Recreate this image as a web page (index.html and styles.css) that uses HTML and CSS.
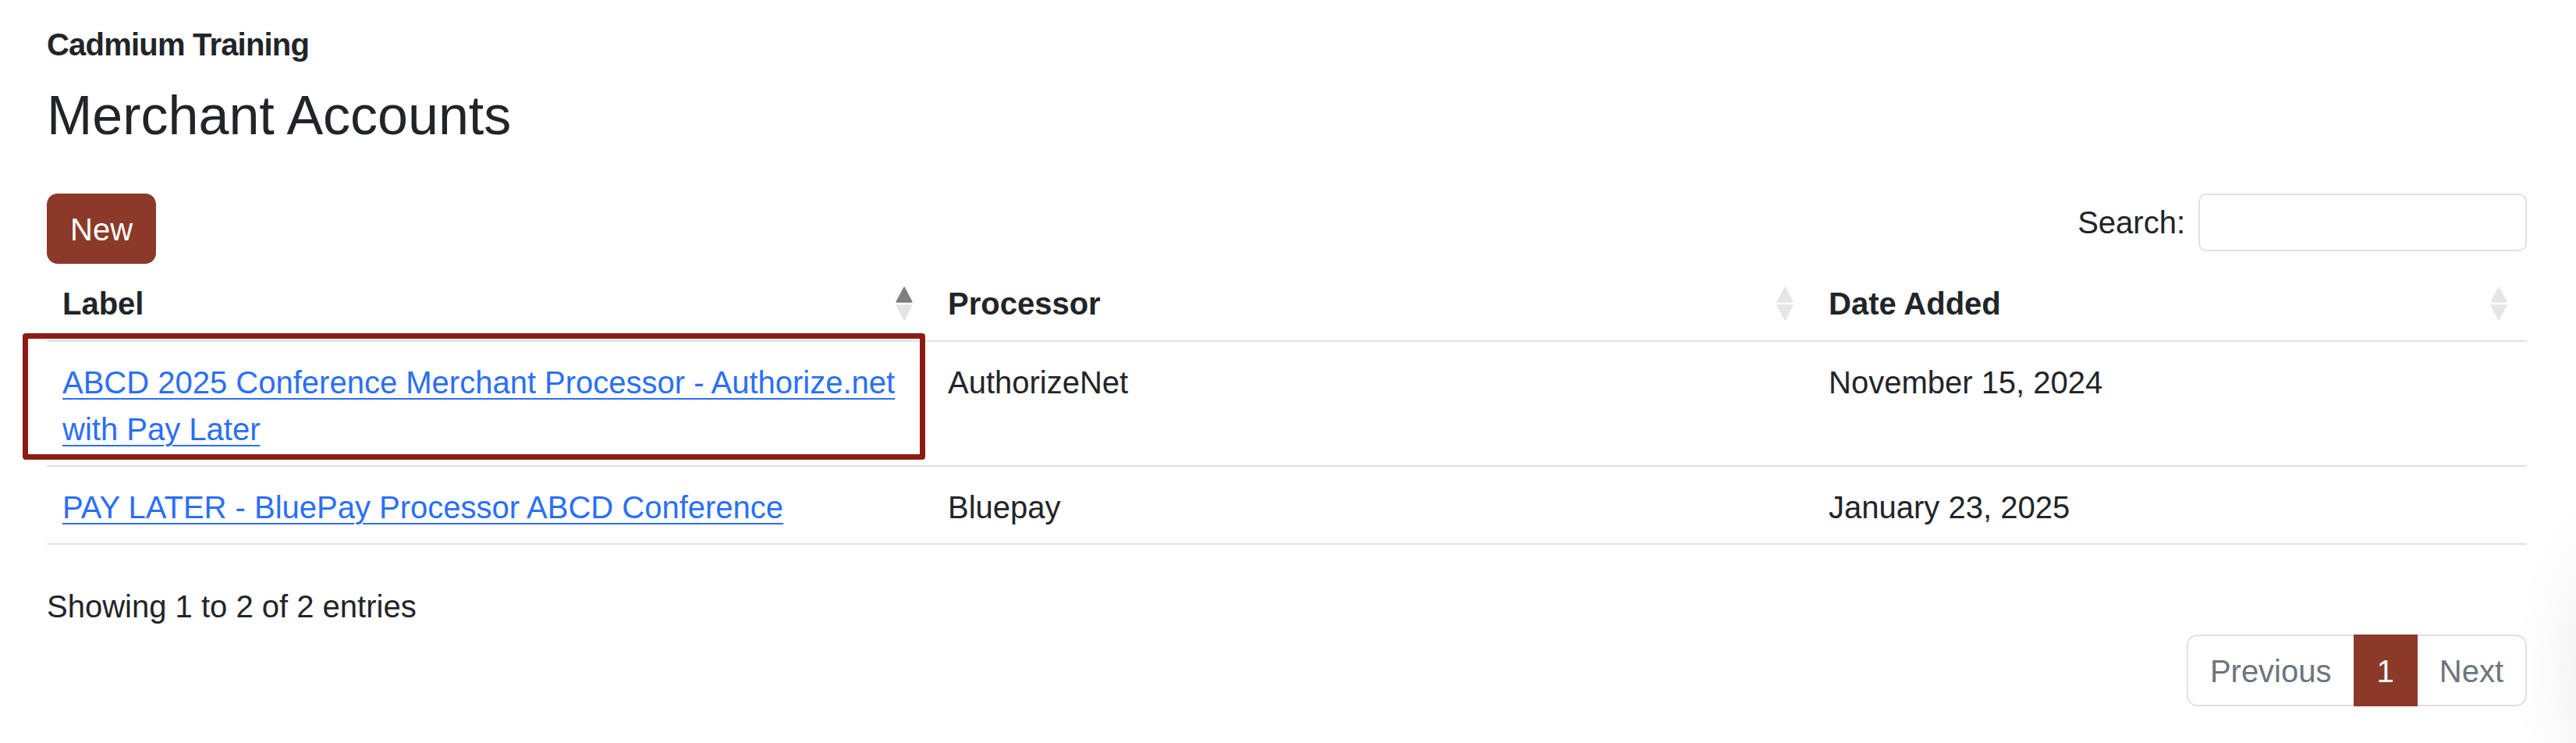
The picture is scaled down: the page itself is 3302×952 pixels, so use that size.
FILE: index.html
```html
<!DOCTYPE html>
<html lang="en">
<head>
<meta charset="utf-8">
<title>Merchant Accounts</title>
<link rel="stylesheet" href="styles.css">
</head>
<body>
<div class="page">
  <div class="org">Cadmium Training</div>
  <h1 class="title">Merchant Accounts</h1>
  <div class="toolbar">
    <button class="btn-new" type="button">New</button>
    <label class="search"><span>Search:</span><input class="search-input" type="search"></label>
  </div>
  <div class="table-wrap">
    <table class="grid">
      <colgroup><col class="c1"><col class="c2"><col class="c3"></colgroup>
      <thead>
        <tr>
          <th><div class="th-in"><span>Label</span><svg class="sort" viewBox="0 0 22 44" width="22" height="44"><polygon class="on" points="11,1 21,20 1,20"/><polygon class="off" points="1,24 21,24 11,43"/></svg></div></th>
          <th><div class="th-in"><span>Processor</span><svg class="sort" viewBox="0 0 22 44" width="22" height="44"><polygon class="off" points="11,1 21,20 1,20"/><polygon class="off" points="1,24 21,24 11,43"/></svg></div></th>
          <th><div class="th-in"><span>Date Added</span><svg class="sort" viewBox="0 0 22 44" width="22" height="44"><polygon class="off" points="11,1 21,20 1,20"/><polygon class="off" points="1,24 21,24 11,43"/></svg></div></th>
        </tr>
      </thead>
      <tbody>
        <tr>
          <td><a class="lnk" href="#">ABCD 2025 Conference Merchant Processor - Authorize.net with Pay Later</a></td>
          <td>AuthorizeNet</td>
          <td>November 15, 2024</td>
        </tr>
        <tr>
          <td><a class="lnk" href="#">PAY LATER - BluePay Processor ABCD Conference</a></td>
          <td>Bluepay</td>
          <td>January 23, 2025</td>
        </tr>
      </tbody>
    </table>
    <div class="highlight"></div>
  </div>
  <div class="info">Showing 1 to 2 of 2 entries</div>
  <nav class="pager-row">
    <ul class="pager">
      <li class="page-item first"><a class="page-link" href="#">Previous</a></li>
      <li class="page-item active"><a class="page-link" href="#">1</a></li>
      <li class="page-item last"><a class="page-link" href="#">Next</a></li>
    </ul>
  </nav>
</div>
</body>
</html>
```

FILE: styles.css
```css
html, body {
  margin: 0;
  padding: 0;
  background: #ffffff;
}

body {
  font-family: "Liberation Sans", Arial, Helvetica, sans-serif;
  font-size: 40px;
  line-height: 60px;
  color: #212529;
}

.page {
  box-sizing: border-box;
  min-height: 952px;
  padding: 33px 63px 0 60px;
  background: radial-gradient(ellipse 110px 230px at 3335px 860px, rgba(0, 0, 0, 0.05), rgba(0, 0, 0, 0) 100%);
}

.org {
  font-size: 40px;
  font-weight: 700;
  line-height: 48px;
  letter-spacing: -0.8px;
  margin-bottom: 25px;
}

.title {
  margin: 0;
  font-size: 70px;
  font-weight: 400;
  line-height: 84px;
}

.toolbar {
  display: flex;
  justify-content: space-between;
  align-items: flex-start;
  margin-top: 58px;
}

.btn-new {
  font-family: inherit;
  font-size: 40px;
  line-height: 60px;
  padding: 16px 30px 14px;
  border: 0;
  border-radius: 14px;
  background: #8b3a29;
  color: #ffffff;
}

.search {
  display: flex;
  align-items: center;
  gap: 17px;
  height: 74px;
}

.search-input {
  box-sizing: border-box;
  width: 421px;
  height: 74px;
  border: 2px solid #dee2e6;
  border-radius: 10px;
  background: #ffffff;
  padding: 0 16px;
  font-family: inherit;
  font-size: 34px;
}

.table-wrap {
  position: relative;
}

.grid {
  width: 100%;
  border-collapse: collapse;
  table-layout: fixed;
}

.c1 { width: 1135px; }
.c2 { width: 1129px; }
.c3 { width: 915px; }

.grid th {
  text-align: left;
  font-weight: 700;
  padding: 21px 20px 17px;
  border-bottom: 2px solid #dee2e6;
  line-height: 60px;
}

.th-in {
  display: flex;
  align-items: center;
  justify-content: space-between;
  padding-right: 5px;
}

.sort {
  display: block;
  flex: none;
}

.sort .on {
  fill: #7f7f7f;
  stroke: #7f7f7f;
  stroke-width: 1.5;
  stroke-linejoin: round;
}

.sort .off {
  fill: #e5e5e5;
  stroke: #e5e5e5;
  stroke-width: 1.5;
  stroke-linejoin: round;
}

.grid td {
  padding: 22px 20px 16px;
  border-bottom: 2px solid #dee2e6;
  vertical-align: top;
  line-height: 60px;
}

.lnk {
  color: #2a6ff7;
  text-decoration: underline;
  text-decoration-thickness: 2px;
  text-underline-offset: 6px;
}

.highlight {
  position: absolute;
  left: -31px;
  top: 89px;
  width: 1157px;
  height: 162px;
  box-sizing: border-box;
  border: 7px solid #8c1b14;
  border-radius: 4px;
  pointer-events: none;
}

.info {
  padding-top: 49px;
  line-height: 60px;
}

.pager-row {
  display: flex;
  justify-content: flex-end;
  margin-top: 6px;
}

.pager {
  display: flex;
  list-style: none;
  margin: 0;
  padding: 0;
}

.page-item + .page-item {
  margin-left: -2px;
}

.page-link {
  display: block;
  padding: 15px 28px 13px;
  line-height: 60px;
  border: 2px solid #dee2e6;
  color: #6c757d;
  text-decoration: none;
  background: #ffffff;
}

.first .page-link {
  border-radius: 14px 0 0 14px;
}

.last .page-link {
  border-radius: 0 14px 14px 0;
}

.active .page-link {
  position: relative;
  background: #8b3a29;
  border-color: #8b3a29;
  color: #ffffff;
}
```
